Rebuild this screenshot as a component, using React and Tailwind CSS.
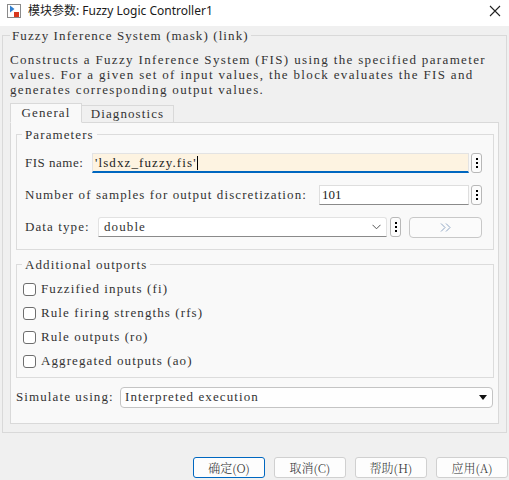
export default function App() {
  const Dots = () => (
    <div className="w-[11px] h-[20px] shrink-0 rounded-[3px] border border-[#b8b8b8] bg-[#fcfcfc] flex flex-col items-center justify-center gap-[2px]">
      <div className="w-[2px] h-[2px] bg-black" />
      <div className="w-[2px] h-[2px] bg-black" />
      <div className="w-[2px] h-[2px] bg-black" />
    </div>
  );
  const Check = ({ label }) => (
    <div className="h-[18px] flex items-center pl-[1px]">
      <div className="w-[13px] h-[13px] rounded-[3px] border border-[#6e6e6e] bg-white shrink-0" />
      <span className="ml-[5px] whitespace-nowrap">{label}</span>
    </div>
  );
  const Btn = ({ label, primary }) => (
    <div
      className={
        "w-[72px] h-[21px] rounded-[3px] flex items-center justify-center text-[12px] tracking-normal font-light font-['Noto_Serif_CJK_SC','Noto_Sans_CJK_SC',serif] text-[#333] " +
        (primary ? "border border-[#0067c0] bg-[#fdfdfd]" : "border border-[#d0d0d0] bg-[#fdfdfd]")
      }
    >
      {label}
    </div>
  );

  return (
    <div className="w-[509px] h-[480px] bg-[#f0f0f0] flex flex-col overflow-hidden text-[#333] font-['Liberation_Serif','Noto_Serif_CJK_SC','Noto_Sans_CJK_SC',serif] text-[13px] tracking-[1.1px]">
      {/* Title bar */}
      <div className="h-[26px] bg-white flex items-center pl-[7px] pr-[7px] pb-[4px] shrink-0 tracking-normal">
        <svg width="14" height="14" viewBox="0 0 14 14" className="shrink-0">
          <rect x="0.5" y="0.5" width="13" height="13" fill="#fff" stroke="#8a8a8a" />
          <path d="M3 1.5 L3 8.5 L7.5 5 Z" fill="#2f7fd0" />
          <rect x="7" y="8" width="5" height="5" fill="#d9381e" />
        </svg>
        <span className="ml-[7px] text-[12px] text-[#1a1a1a] font-['Noto_Sans','Noto_Sans_CJK_SC',sans-serif] whitespace-nowrap">
          模块参数: Fuzzy Logic Controller1
        </span>
        <svg width="12" height="12" viewBox="0 0 12 12" className="ml-auto mr-[1px]">
          <path d="M1 1 L11 11 M11 1 L1 11" stroke="#222" strokeWidth="1.1" />
        </svg>
      </div>

      {/* Outer group */}
      <fieldset className="mx-[2px] mt-[3px] border border-[#d9d9d9] px-[7px] pb-[8px] min-w-0">
        <legend className="px-[2px] leading-[13px] whitespace-nowrap">Fuzzy Inference System (mask) (link)</legend>
        <div className="mt-[10px] leading-[15px] whitespace-nowrap tracking-[1.35px]">
          <div>Constructs a Fuzzy Inference System (FIS) using the specified parameter</div>
          <div>values. For a given set of input values, the block evaluates the FIS and</div>
          <div>generates corresponding output values.</div>
        </div>

        {/* Tabs */}
        <div className="mt-[6px] flex items-end relative z-10">
          <div className="w-[72px] h-[20px] -mb-px border border-[#d9d9d9] border-b-[#f9f9f9] bg-[#f9f9f9] flex items-center justify-center">
            General
          </div>
          <div className="w-[92px] h-[18px] -mb-px border border-l-0 border-[#d9d9d9] bg-[#f0f0f0] flex items-center justify-center">
            Diagnostics
          </div>
        </div>

        {/* Panel */}
        <div className="border border-[#d9d9d9] bg-[#f9f9f9] pl-[5px] pr-[4px] pt-[5px] pb-[16px]">
          <fieldset className="border border-[#dcdcdc] pl-[5px] pr-[11px] pt-[12px] pb-[12px] min-w-0">
            <legend className="px-[3px] leading-[13px]">Parameters</legend>
            <div className="flex flex-col gap-[12px]">
              <div className="h-[20px] flex items-center pl-[3px]">
                <span className="w-[67px] shrink-0 whitespace-nowrap tracking-[0.5px]">FIS name:</span>
                <div className="flex-1 h-[20px] bg-[#fdf3e1] border border-[#e3e3e3] border-b-2 border-b-[#0067c0] flex items-center pl-[2px] text-[#222]">
                  <span className="whitespace-nowrap">'lsdxz_fuzzy.fis'</span>
                  <span className="w-px h-[14px] bg-black" />
                </div>
                <div className="w-[2px] shrink-0" />
                <Dots />
              </div>
              <div className="h-[20px] flex items-center pl-[3px]">
                <span className="w-[294px] shrink-0 whitespace-nowrap">Number of samples for output discretization:</span>
                <div className="flex-1 h-[20px] bg-white border border-[#dedede] border-b-[#8a8a8a] flex items-center pl-[2px] text-[#222] tracking-normal">
                  101
                </div>
                <div className="w-[2px] shrink-0" />
                <Dots />
              </div>
              <div className="h-[20px] flex items-center pl-[3px]">
                <span className="w-[73px] shrink-0 whitespace-nowrap">Data type:</span>
                <div className="flex-1 h-[20px] bg-white border border-[#e2e2e2] border-b-[#8a8a8a] rounded-t-[3px] flex items-center pl-[5px] pr-[5px]">
                  <span>double</span>
                  <svg width="9" height="6" viewBox="0 0 9 6" className="ml-auto">
                    <path d="M0.5 0.8 L4.5 4.8 L8.5 0.8" fill="none" stroke="#555" strokeWidth="1" />
                  </svg>
                </div>
                <div className="w-[3px] shrink-0" />
                <Dots />
                <div className="w-[8px] shrink-0" />
                <div className="w-[73px] h-[21px] shrink-0 rounded-[4px] border border-[#c8c8c8] bg-[#fbfbfb] flex items-center justify-center">
                  <svg width="12" height="9" viewBox="0 0 12 9">
                    <path d="M1 0.5 L5 4.5 L1 8.5" fill="none" stroke="#8fa6c4" strokeWidth="1" />
                    <path d="M6 0.5 L10 4.5 L6 8.5" fill="none" stroke="#8fa6c4" strokeWidth="1" />
                  </svg>
                </div>
              </div>
            </div>
          </fieldset>

          <fieldset className="mt-[8px] border border-[#dcdcdc] pl-[5px] pr-[11px] pt-[9px] pb-[7px] min-w-0">
            <legend className="px-[3px] leading-[13px]">Additional outports</legend>
            <div className="flex flex-col gap-[6px]">
              <Check label="Fuzzified inputs (fi)" />
              <Check label="Rule firing strengths (rfs)" />
              <Check label="Rule outputs (ro)" />
              <Check label="Aggregated outputs (ao)" />
            </div>
          </fieldset>

          <div className="mt-[9px] h-[20px] flex items-center">
            <span className="w-[104px] shrink-0 whitespace-nowrap">Simulate using:</span>
            <div className="flex-1 mr-[1px] h-[21px] bg-[#fefefe] border border-[#c4c4c4] rounded-[4px] flex items-center pl-[4px] pr-[5px]">
              <span className="whitespace-nowrap">Interpreted execution</span>
              <svg width="8" height="5" viewBox="0 0 8 5" className="ml-auto">
                <path d="M0 0 L8 0 L4 5 Z" fill="#111" />
              </svg>
            </div>
          </div>
        </div>
      </fieldset>

      {/* Buttons */}
      <div className="mt-[24px] flex justify-end gap-[9px] pr-[1px]">
        <Btn label="确定(O)" primary />
        <Btn label="取消(C)" />
        <Btn label="帮助(H)" />
        <Btn label="应用(A)" />
      </div>
    </div>
  );
}
